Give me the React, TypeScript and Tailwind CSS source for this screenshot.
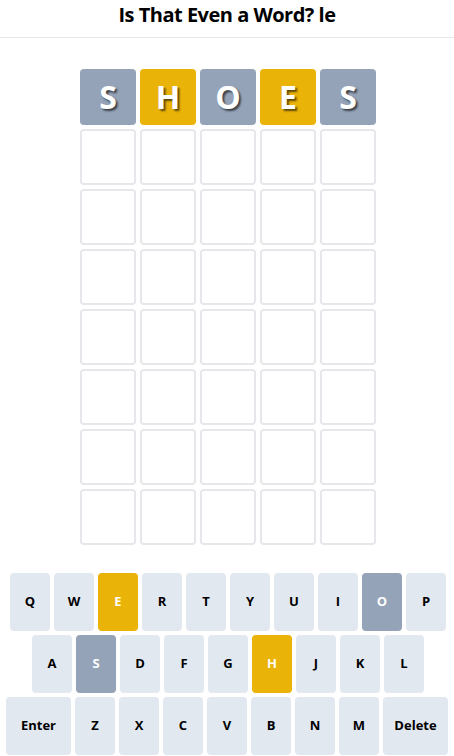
import React from "react";

const guess = [
  { l: "S", c: "bg-[#94a3b8]" },
  { l: "H", c: "bg-[#eab308]" },
  { l: "O", c: "bg-[#94a3b8]" },
  { l: "E", c: "bg-[#eab308]" },
  { l: "S", c: "bg-[#94a3b8]" },
];

const status: Record<string, string> = {
  E: "bg-[#eab308] text-white",
  O: "bg-[#94a3b8] text-white",
  S: "bg-[#94a3b8] text-white",
  H: "bg-[#eab308] text-white",
};

function Key({ k, wide }: { k: string; wide?: boolean }) {
  const cls = status[k] ?? "bg-[#e2e8f0] text-black";
  return (
    <div
      className={`${wide ? "w-[65px]" : "w-[40px]"} h-[58px] rounded flex items-center justify-center text-[13px] font-bold ${cls}`}
    >
      {k}
    </div>
  );
}

export default function App() {
  const rows = ["QWERTYUIOP", "ASDFGHJKL"];
  return (
    <div
      className="w-[454px] h-[756px] bg-white flex flex-col"
      style={{ fontFamily: "'Open Sans', 'Noto Sans', sans-serif" }}
    >
      <div className="h-[38px] border-b border-[#e5e7eb] flex items-center justify-center">
        <h1 className="text-[20px] font-bold text-black leading-none tracking-[-0.5px] -mt-[7px]">Is That Even a Word? le</h1>
      </div>
      <div className="flex flex-col items-center gap-[4px] mt-[31px] pl-[2px]">
        <div className="flex gap-[4px]">
          {guess.map((g, i) => (
            <div
              key={i}
              className={`w-[56px] h-[56px] rounded flex items-center justify-center text-[32px] font-bold text-white ${g.c}`}
              style={{ textShadow: "2px 2px 2px rgba(0,0,0,0.6)" }}
            >
              {g.l}
            </div>
          ))}
        </div>
        {Array.from({ length: 7 }).map((_, r) => (
          <div key={r} className="flex gap-[4px]">
            {Array.from({ length: 5 }).map((_, c) => (
              <div key={c} className="w-[56px] h-[56px] rounded border-2 border-[#e5e7eb] bg-white" />
            ))}
          </div>
        ))}
      </div>
      <div className="flex flex-col items-center gap-[4px] mt-[28px]">
        {rows.map((r) => (
          <div key={r} className="flex gap-[4px] pl-[2px]">
            {r.split("").map((k) => (
              <Key key={k} k={k} />
            ))}
          </div>
        ))}
        <div className="flex gap-[4px]">
          <Key k="Enter" wide />
          {"ZXCVBNM".split("").map((k) => (
            <Key key={k} k={k} />
          ))}
          <Key k="Delete" wide />
        </div>
      </div>
    </div>
  );
}
